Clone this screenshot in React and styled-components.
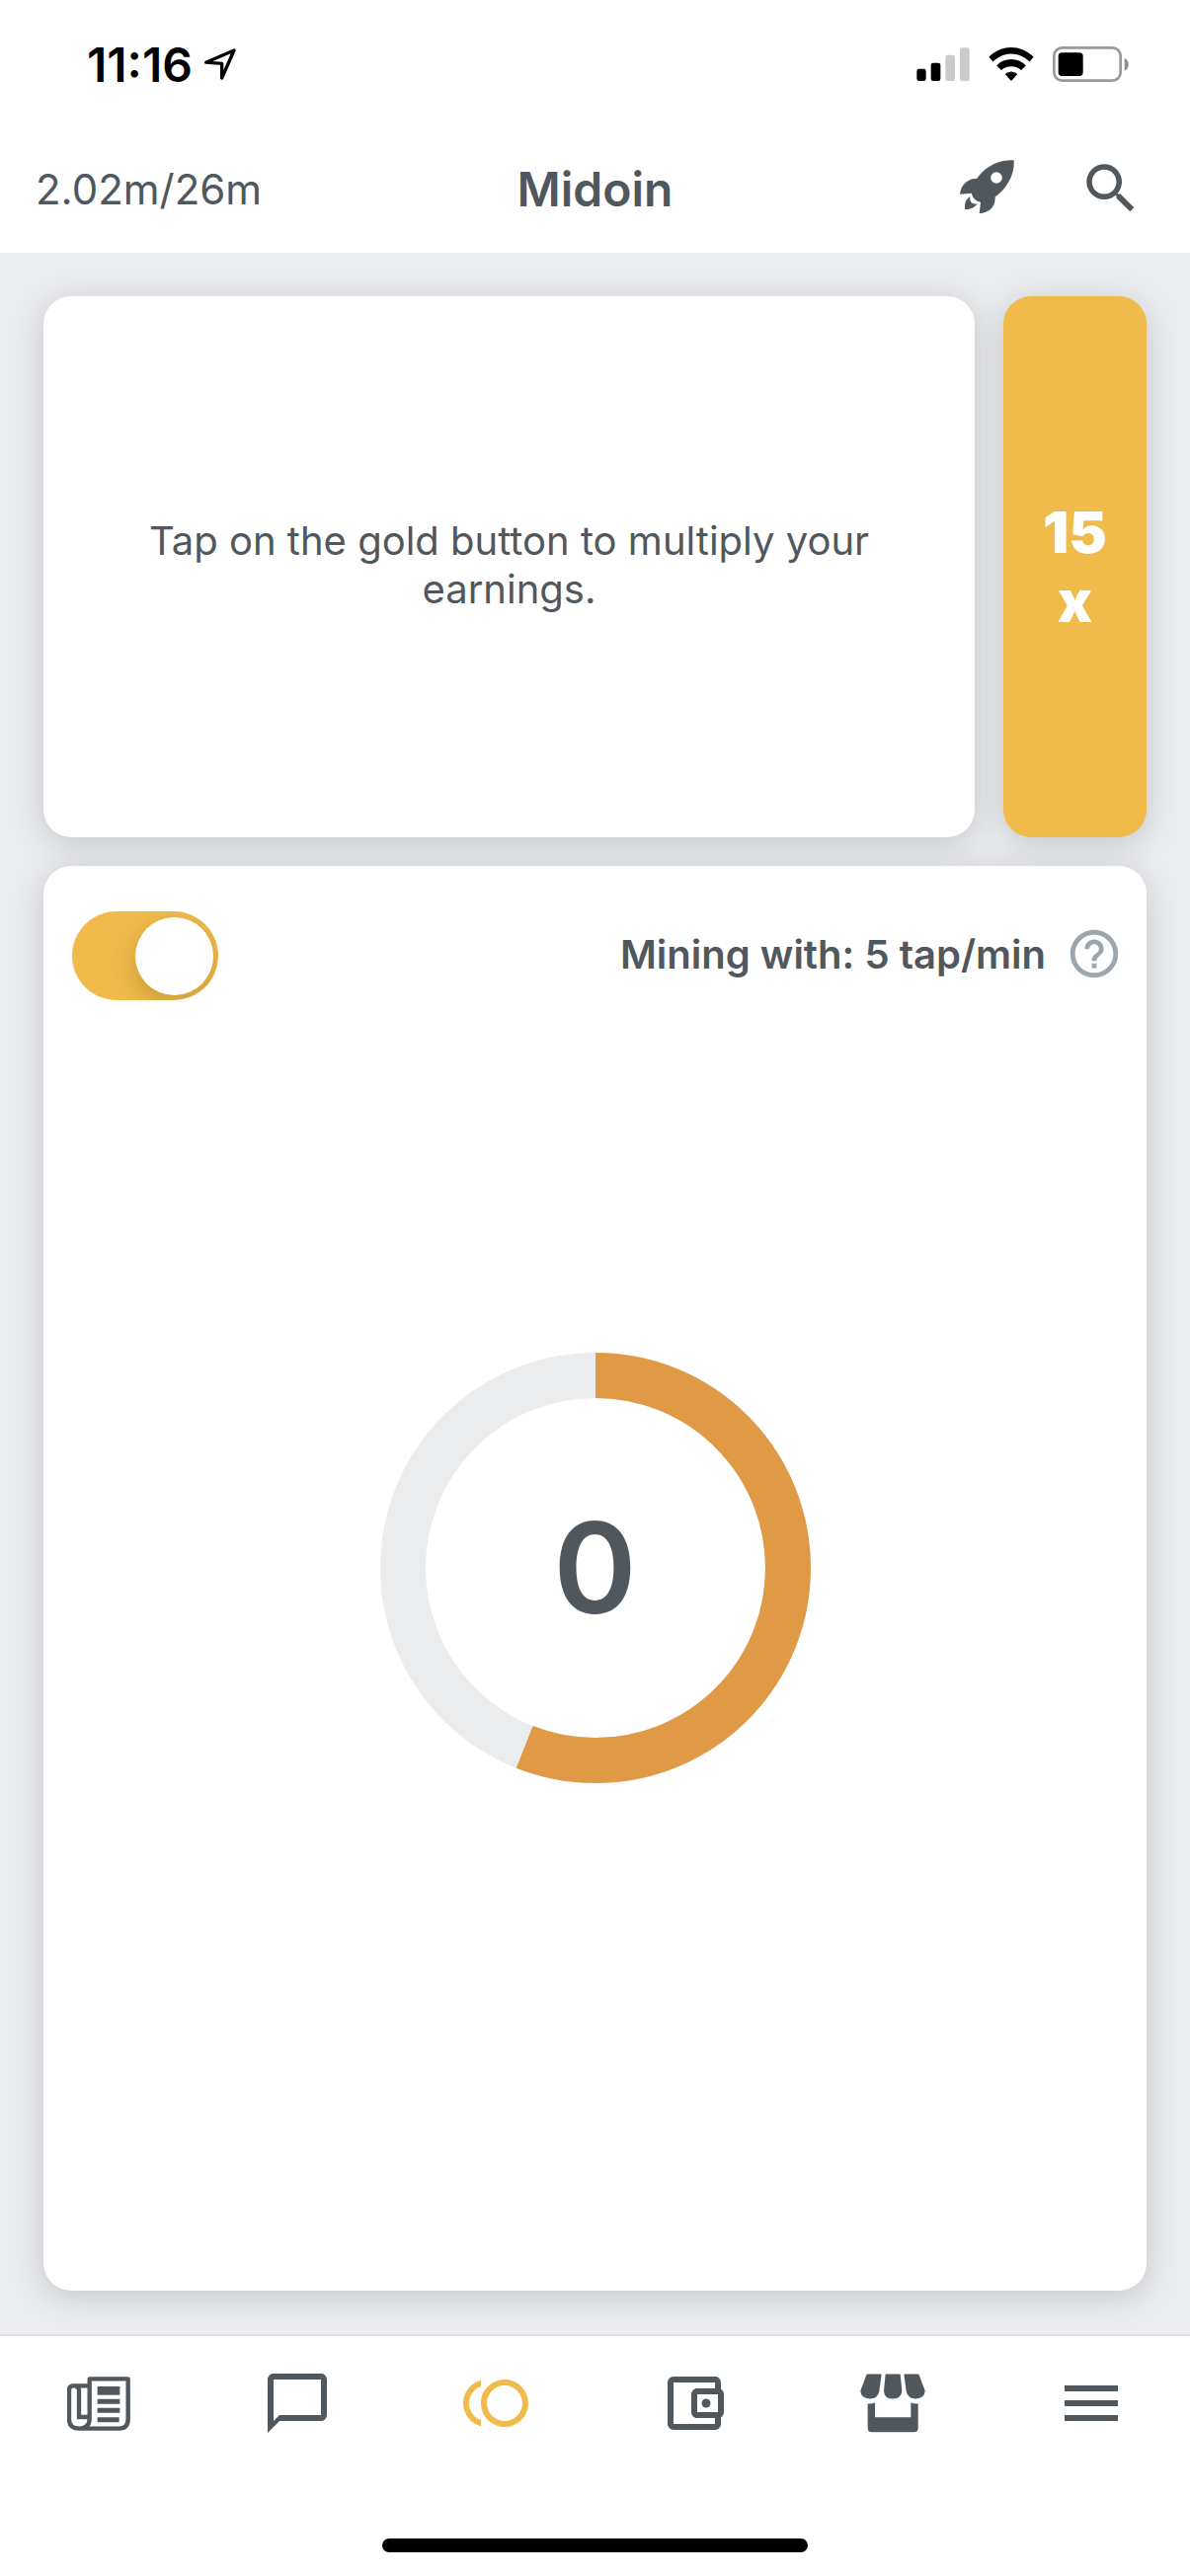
import { useState } from 'react'
import styled, { createGlobalStyle } from 'styled-components'
import {
  MdSearch,
  MdHelpOutline,
  MdOutlineChatBubbleOutline,
  MdToll,
  MdOutlineAccountBalanceWallet,
  MdMenu
} from 'react-icons/md'

const colors = {
  text: '#50575d',
  muted: '#9ba6af',
  gold: '#f0bb4b',
  orange: '#e09944',
  grey: '#ebecee',
  line: '#dfe1e4'
}

const GlobalStyle = createGlobalStyle`
  *{
    box-sizing: border-box;
  }
  body{
    margin: 0;
    background: #fff;
    color: ${colors.text};
    font-family: Inter, "Liberation Sans", sans-serif;
  }
  button, input{
    font: inherit;
  }
`

const LocationIcon = () => (
  <svg width="32" height="32" viewBox="633 147 96 96" fill="none" stroke="#000" strokeWidth="10" strokeLinejoin="round">
    <path d="M638 189.500L723 153L686 237V193Z" />
  </svg>
)

const SignalIcon = () => (
  <svg width="54" height="34" viewBox="145 145 162 102">
    <rect x="146" y="210" width="28" height="37" rx="7" />
    <rect x="189" y="192" width="29" height="55" rx="7" />
    <rect x="233" y="168" width="29" height="79" rx="7" fill="#cbcbcb" />
    <rect x="277" y="146" width="29" height="101" rx="7" fill="#cbcbcb" />
  </svg>
)

const WifiIcon = () => (
  <svg width="46" height="34" viewBox="363 144 138 103">
    <path d="M363 173Q394 144 432 144Q470 144 501 173L488 188Q463 164 432 164Q401 164 376 188Z" />
    <path d="M387 199Q407 180 432 180Q457 180 477 199L463 214Q450 202 432 202Q414 202 401 214Z" />
    <path d="M413 226Q421 218 432 218Q443 218 451 226L432 247Z" />
  </svg>
)

const BatteryIcon = () => (
  <svg width="77" height="36" viewBox="559 142 231 108">
    <rect x="563" y="146" width="202" height="100" rx="25" fill="none" stroke="#999" strokeWidth="8" />
    <rect x="576" y="161" width="75" height="71" rx="11" />
    <path d="M777 177Q789 183 789 196.500Q789 210 777 216Z" fill="#8b8b8b" />
  </svg>
)

const RocketIcon = () => (
  <svg width="55" height="59" viewBox="276 486 165 177" fill="currentColor">
    <path
      fillRule="evenodd"
      d="M440 487C397 483 352 507 328 542C301 542 279 560 276 590L312 587C313 600 325 612 339 614L335 649C365 646 385 628 383 598C419 573 443 530 440 487ZM387 522.500a17.500 17.500 0 1 1 0 35a17.500 17.500 0 1 1 0-35Z"
    />
    <path d="M308 597C294 604 290 618 291 636C305 637 321 632 329 618C316 624 302 612 308 597Z" />
  </svg>
)

const NewsIcon = () => (
  <svg width="64" height="55" viewBox="207 377 192 165" fill="none" stroke="currentColor" strokeWidth="13">
    <path d="M275 405H226Q213 405 213 418V507Q213 535 243 535H364Q392 535 392 507V384H275V505Q275 532 246 535" strokeLinejoin="round" />
    <path d="M232 408Q243 408 243 418V500H275" />
    <path d="M299 420H367" strokeWidth="26" />
    <path d="M299 453H367M299 480H367M299 508H365" strokeWidth="15" />
  </svg>
)

const StoreIcon = () => (
  <svg width="66" height="60" viewBox="212 371 198 179" fill="currentColor">
    <path d="M232 372H277L270 424Q266 447 241 447Q214 446 213 423Z" />
    <path d="M289 372H334L339 423Q337 447 311 447Q285 447 284 423Z" />
    <path d="M345 372H390L409 423Q408 446 381 447Q357 447 352 424Z" />
    <path d="M235 462Q247 463 257 459V503H366V459Q376 463 388 462V536Q388 548 376 548H247Q235 548 235 536Z" />
  </svg>
)

const tabs = [
  { label: 'News', icon: <NewsIcon /> },
  { label: 'Chat', icon: <MdOutlineChatBubbleOutline /> },
  { label: 'Mining', icon: <MdToll />, active: true },
  { label: 'Wallet', icon: <MdOutlineAccountBalanceWallet /> },
  { label: 'Store', icon: <StoreIcon /> },
  { label: 'Menu', icon: <MdMenu /> }
]

function ProgressRing({ value, children }) {
  return (
    <Ring>
      <svg viewBox="0 0 436 436" fill="none" strokeWidth="46">
        <circle cx="218" cy="218" r="195" stroke={colors.grey} />
        <circle
          cx="218"
          cy="218"r="195"
          stroke={colors.orange}
          pathLength="100"
          strokeDasharray={`${value} 100`}
          transform="rotate(-90 218 218)"
        />
      </svg>
      <Count>{children}</Count>
    </Ring>
  )
}

export default function App() {
  const [mining, setMining] = useState(true)

  return (
    <Screen>
      <GlobalStyle />
      <StatusBar>
        <Clock>11:16 <LocationIcon /></Clock>
        <StatusIcons>
          <SignalIcon />
          <WifiIcon />
          <BatteryIcon />
        </StatusIcons>
      </StatusBar>
      <Header>
        <Balance>2.02m/26m</Balance>
        <Title>Midoin</Title>
        <Actions>
          <IconButton aria-label="Boost"><RocketIcon /></IconButton>
          <IconButton aria-label="Search"><MdSearch size={66} /></IconButton>
        </Actions>
      </Header>
      <Main>
        <TopRow>
          <TapCard>
            <Hint>Tap on the gold button to multiply your earnings.</Hint>
          </TapCard>
          <MultiplyButton>
            <span>15</span>
            <span>x</span>
          </MultiplyButton>
        </TopRow>
        <MiningCard>
          <MiningBar>
            <Toggle
              type="checkbox"
              role="switch"
              aria-label="Mining"
              checked={mining}
              onChange={e => setMining(e.target.checked)}
            />
            <Rate>
              Mining with: 5 tap/min
              <IconButton aria-label="Help" $muted><MdHelpOutline size={58} /></IconButton>
            </Rate>
          </MiningBar>
          <RingArea>
            <ProgressRing value={56}>0</ProgressRing>
          </RingArea>
        </MiningCard>
      </Main>
      <TabBar>
        {tabs.map(tab => (
          <Tab key={tab.label} href="#" aria-label={tab.label} $active={tab.active}>
            {tab.icon}
          </Tab>
        ))}
      </TabBar>
      <HomeArea>
        <HomeIndicator />
      </HomeArea>
    </Screen>
  )
}

const Screen = styled.div`
  display: flex;
  flex-direction: column;
  min-height: 100vh;
`
const StatusBar = styled.div`
  display: flex;
  align-items: center;
  justify-content: space-between;
  height: 130px;
  padding: 0 62px 0 88px;
  color: #000;
`
const Clock = styled.div`
  display: flex;
  align-items: center;
  gap: 12px;
  font-size: 48px;
  font-weight: 600;
`
const StatusIcons = styled.div`
  display: flex;
  align-items: center;
  gap: 19px;
`
const Header = styled.header`
  display: grid;
  grid-template-columns: 1fr auto 1fr;
  align-items: center;
  height: 126px;
  padding: 0 36px 4px;
`
const Balance = styled.div`
  font-size: 42px;
`
const Title = styled.h1`
  margin: 0;
  font-size: 48px;
  font-weight: 600;
`
const Actions = styled.div`
  display: flex;
  align-items: center;
  justify-content: flex-end;
  gap: 65px;
  padding-right: 11px;
`
const IconButton = styled.button`
  display: flex;
  padding: 0;
  border: 0;
  background: none;
  color: ${props => (props.$muted ? colors.muted : colors.text)};
  cursor: pointer;
`
const Main = styled.main`
  flex: 1;
  display: flex;
  flex-direction: column;
  gap: 29px;
  padding: 44px;
  background: ${colors.grey};
`
const TopRow = styled.div`
  display: flex;
  gap: 29px;
  min-height: 548px;
`
const Card = styled.section`
  border-radius: 28px;
  background: #fff;
  box-shadow: 0 6px 32px rgba(60, 70, 80, 0.22);
`
const TapCard = styled(Card)`
  flex: 1;
  display: flex;
  align-items: center;
  justify-content: center;
  padding: 0 80px 4px;
`
const Hint = styled.p`
  margin: 0;
  font-size: 40px;
  line-height: 49px;
  text-align: center;
`
const MultiplyButton = styled.button`
  display: flex;
  flex-direction: column;
  align-items: center;
  justify-content: center;
  width: 145px;
  padding: 0;
  border: 0;
  border-radius: 28px;
  background: ${colors.gold};
  box-shadow: 0 6px 32px rgba(60, 70, 80, 0.22);
  color: #fff;
  font-size: 58px;
  font-weight: 900;
  line-height: 70px;
  cursor: pointer;
`
const MiningCard = styled(Card)`
  flex: 1;
  display: flex;
  flex-direction: column;
  padding: 46px 0 158px;
`
const MiningBar = styled.div`
  display: flex;
  align-items: center;
  justify-content: space-between;
  padding: 0 24px 0 29px;
`
const Toggle = styled.input`
  appearance: none;
  display: flex;
  align-items: center;
  justify-content: ${props => (props.checked ? 'flex-end' : 'flex-start')};
  width: 148px;
  height: 90px;
  margin: 0;
  padding: 0 5px;
  border-radius: 45px;
  background: ${props => (props.checked ? colors.gold : colors.grey)};
  overflow: hidden;
  cursor: pointer;

  &::before{
    content: '';
    width: 79px;
    height: 79px;
    border-radius: 50%;
    background: #fff;
    box-shadow: 0 8px 24px rgba(80, 60, 0, 0.25);
  }
`
const Rate = styled.div`
  display: flex;
  align-items: center;
  gap: 20px;
  padding-bottom: 4px;
  font-size: 40px;
  font-weight: 600;
`
const RingArea = styled.div`
  flex: 1;
  display: flex;
  align-items: center;
  justify-content: center;
`
const Ring = styled.div`
  display: grid;
  place-items: center;
  width: 436px;

  > *{
    grid-area: 1 / 1;
  }
`
const Count = styled.div`
  font-size: 128px;
  font-weight: 600;
  line-height: 1;
`
const TabBar = styled.nav`
  display: grid;
  grid-template-columns: repeat(6, 1fr);
  height: 138px;
  border-top: 2px solid ${colors.line};
`
const Tab = styled.a`
  display: flex;
  align-items: center;
  justify-content: center;
  color: ${props => (props.$active ? colors.gold : colors.text)};
  font-size: 72px;
`
const HomeArea = styled.div`
  display: flex;
  justify-content: center;
  padding: 69px 0 24px;
`
const HomeIndicator = styled.div`
  width: 431px;
  height: 14px;
  border-radius: 7px;
  background: #000;
`
